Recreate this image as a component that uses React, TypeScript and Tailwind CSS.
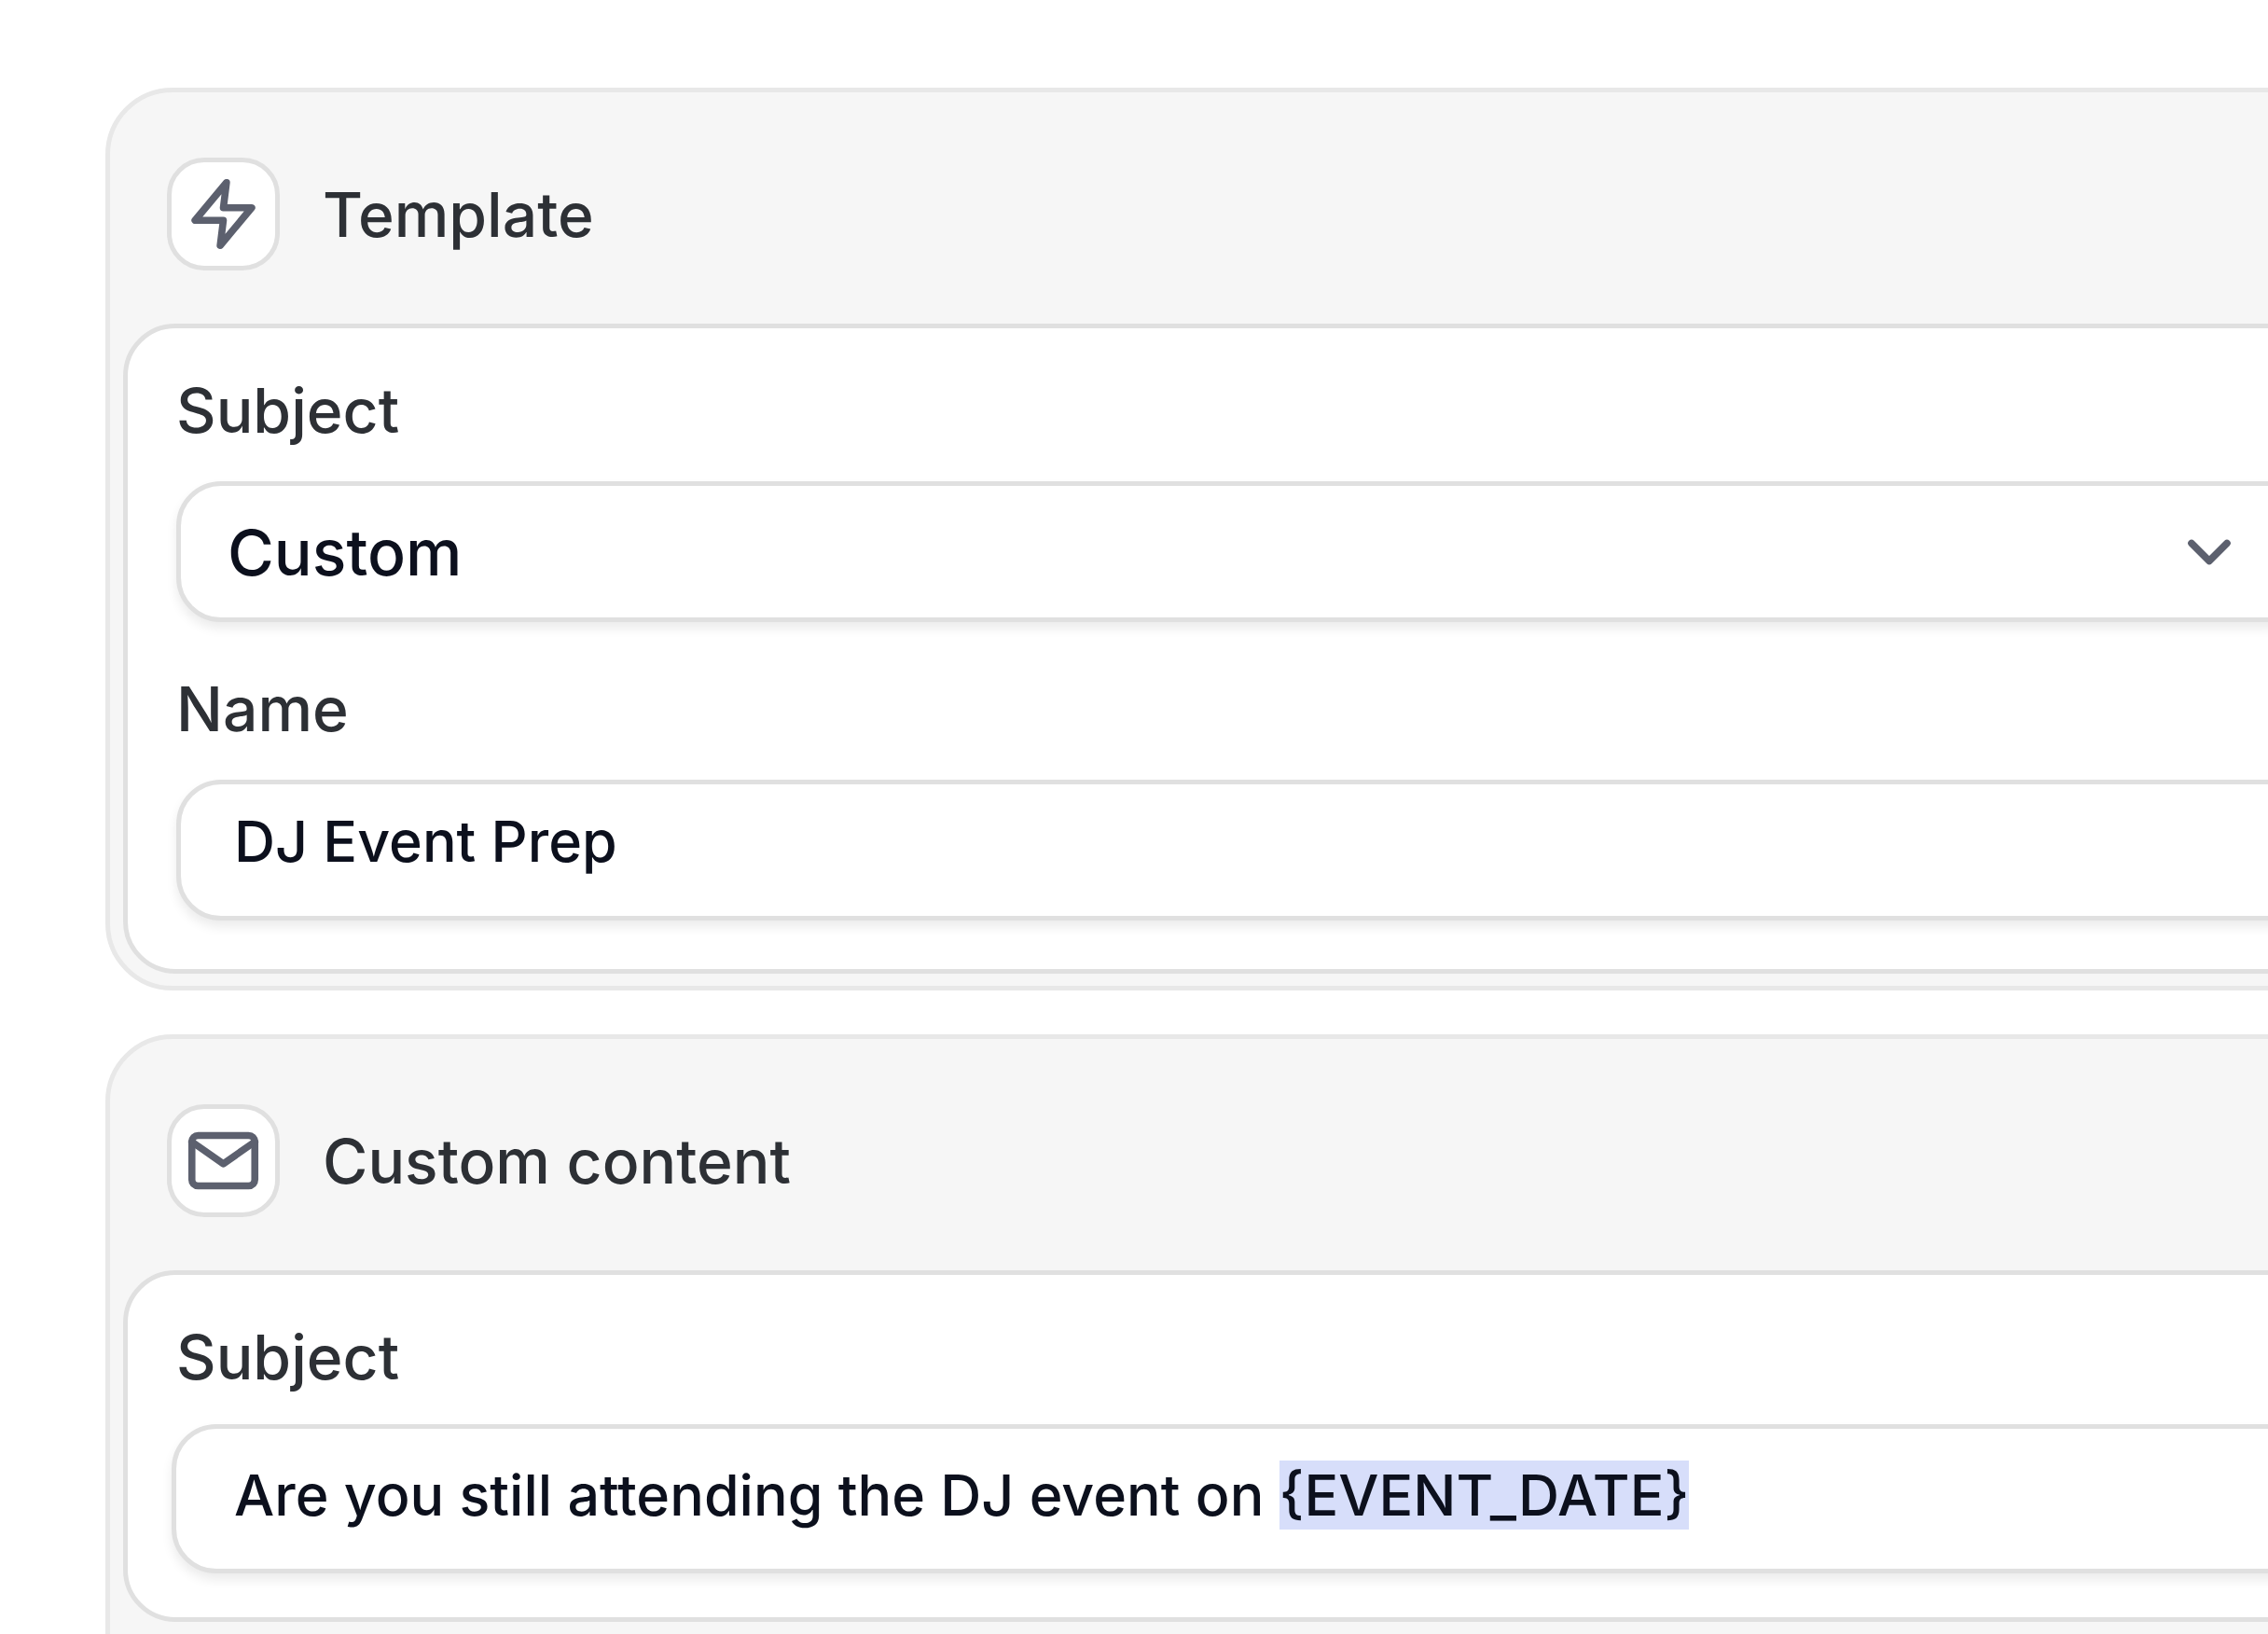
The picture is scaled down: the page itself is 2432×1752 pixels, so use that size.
import React, { useEffect, useRef, useState } from 'react';

const TOKEN = '{EVENT_DATE}';

function ZapIcon() {
    return (
        <svg viewBox="0 0 24 24" className="size-[81px]" fill="none" stroke="currentColor" strokeWidth="2.25" strokeLinecap="round" strokeLinejoin="round" aria-hidden="true">
            <polygon points="13 2 3 14 12 14 11 22 21 10 12 10 13 2" />
        </svg>
    );
}

function MailIcon() {
    return (
        <svg viewBox="0 0 24 24" className="size-[81px]" fill="none" stroke="currentColor" strokeWidth="2.25" strokeLinecap="round" strokeLinejoin="round" aria-hidden="true">
            <path d="M4 4h16c1.1 0 2 .9 2 2v12c0 1.1-.9 2-2 2H4c-1.1 0-2-.9-2-2V6c0-1.1.9-2 2-2z" />
            <polyline points="22 6 12 13 2 6" />
        </svg>
    );
}

function ChevronIcon() {
    return (
        <svg viewBox="0 0 24 24" className="pointer-events-none absolute right-[77px] top-1/2 size-[76px] -translate-y-1/2 text-[#5c606e]" fill="none" stroke="currentColor" strokeWidth="2.4" strokeLinecap="round" strokeLinejoin="round" aria-hidden="true">
            <polyline points="6 9 12 15 18 9" />
        </svg>
    );
}

interface SectionProps {
    title: string;
    icon: React.ReactNode;
    className: string;
    bodyClass: string;
    children: React.ReactNode;
}

function Section({ title, icon, className, bodyClass, children }: SectionProps) {
    return (
        <section className={`rounded-[72px] border-[5px] border-[#e8e8e8] bg-[#f6f6f6] px-[14px] ${className}`}>
            <header className="flex items-center gap-[46px] px-[47px] pt-[70px] pb-[57px]">
                <div className="flex size-[121px] shrink-0 items-center justify-center rounded-[40px] border-[5px] border-[#e0e0e0] bg-white text-[#5c606e]">
                    {icon}
                </div>
                <h2 className="text-[66px] leading-[80px] font-medium text-[#2d3035]">{title}</h2>
            </header>
            <div className={`rounded-[56px] border-[5px] border-[#e0e0e0] bg-white px-[52px] pt-12 ${bodyClass}`}>
                {children}
            </div>
        </section>
    );
}

export default function App() {
    const [subject, setSubject] = useState('custom');
    const [name, setName] = useState('DJ Event Prep');
    const [content, setContent] = useState(`Are you still attending the DJ event on ${TOKEN}`);
    const contentRef = useRef<HTMLInputElement>(null);

    // Start with the placeholder token selected so it can be replaced right away
    useEffect(() => {
        const el = contentRef.current;
        if (!el) return;
        const start = el.value.indexOf(TOKEN);
        el.focus({ preventScroll: true });
        el.setSelectionRange(start, start + TOKEN.length);
    }, []);

    return (
        <div className="h-screen overflow-hidden bg-white pt-[94px] pl-[113px] font-['Inter',sans-serif]">
            <main className="-mr-32 flex flex-col gap-[47px]">
                <Section title="Template" icon={<ZapIcon />} className="pb-[13px]" bodyClass="pb-[52px]">
                    <label htmlFor="subject" className="block text-[66px] leading-[80px] font-medium text-[#2d3035]">Subject</label>
                    <div className="relative mt-9">
                        <select
                            id="subject"
                            value={subject}
                            onChange={(e) => setSubject(e.target.value)}
                            className="block h-[151px] w-full appearance-none rounded-[48px] border-[5px] border-[#e0e0e0] bg-white pl-[50px] text-[68px] font-medium text-[#0c101d] shadow-[0_7px_12px_rgba(0,0,0,0.08)] outline-none"
                        >
                            <option value="custom">Custom</option>
                        </select>
                        <ChevronIcon />
                    </div>

                    <label htmlFor="name" className="mt-[53px] block text-[66px] leading-[80px] font-medium text-[#2d3035]">Name</label>
                    <input
                        id="name"
                        type="text"
                        value={name}
                        onChange={(e) => setName(e.target.value)}
                        className="mt-9 block h-[151px] w-full rounded-[48px] border-[5px] border-[#e0e0e0] bg-white pb-5 pl-[57px] text-[61px] leading-[68px] font-medium text-[#0c101d] shadow-[0_7px_12px_rgba(0,0,0,0.08)] outline-none"
                    />
                </Section>

                <Section title="Custom content" icon={<MailIcon />} className="pb-[120px]" bodyClass="pb-[47px]">
                    <label htmlFor="content" className="block text-[66px] leading-[80px] font-medium text-[#2d3035]">Subject</label>
                    <div className="-mx-[5px] mt-8">
                        <input
                            id="content"
                            ref={contentRef}
                            type="text"
                            value={content}
                            onChange={(e) => setContent(e.target.value)}
                            className="block h-[160px] w-full rounded-[48px] border-[5px] border-[#e0e0e0] bg-white pb-2 pl-[62px] text-[61px] leading-[68px] font-medium text-[#0c101d] shadow-[0_7px_12px_rgba(0,0,0,0.08)] outline-none selection:bg-[#d7defa] selection:text-[#0c101d]"
                        />
                    </div>
                </Section>
            </main>
        </div>
    );
}
